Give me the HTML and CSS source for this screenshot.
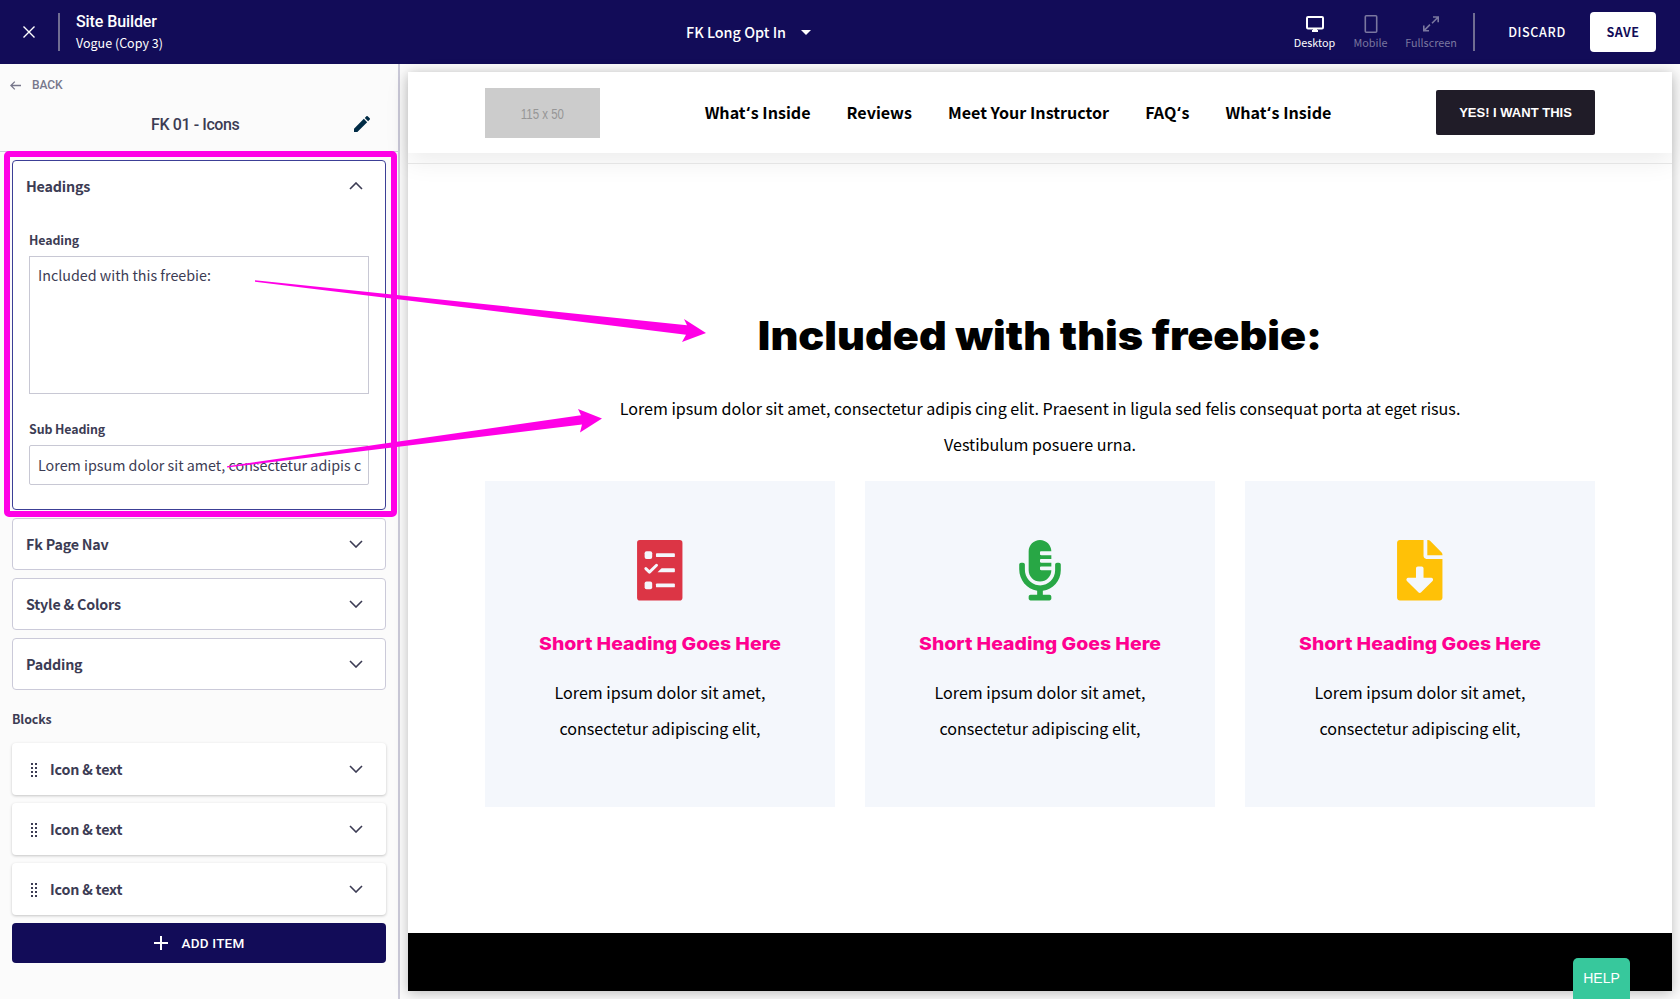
FILE: index.html
```html
<!DOCTYPE html>
<html lang="en">
<head>
<meta charset="utf-8">
<title>Site Builder</title>
<link rel="stylesheet" href="styles.css">
</head>
<body>
<svg class="defs" width="0" height="0" aria-hidden="true">
  <symbol id="chevron" viewBox="0 0 14 8"><path d="M1 1l6 6 6-6" fill="none" stroke="currentColor" stroke-width="1.6"/></symbol>
  <symbol id="grip" viewBox="0 0 6 14"><path d="M0 0h2v2H0zM4 0h2v2H4zM0 4h2v2H0zM4 4h2v2H4zM0 8h2v2H0zM4 8h2v2H4zM0 12h2v2H0zM4 12h2v2H4z" fill="currentColor"/></symbol>
</svg>
<header class="topbar">
  <div class="topbar-left">
    <svg class="close" viewBox="0 0 12 12"><path d="M.5.5l11 11M11.5.5l-11 11" stroke="#fff" stroke-width="1.4"/></svg>
    <span class="divider"></span>
    <div class="site">
      <span class="site-title">Site Builder</span>
      <span class="site-name">Vogue (Copy 3)</span>
    </div>
  </div>
  <div class="page-picker"><span>FK Long Opt In</span><i class="caret"></i></div>
  <div class="topbar-right">
    <div class="view view-desktop">
      <svg width="18" height="18" viewBox="0 0 18 18"><rect x="1" y="2" width="16" height="11.5" rx="1" fill="none" stroke="currentColor" stroke-width="2"/><path d="M7 13h4v2h1v2H6v-2h1z" fill="currentColor"/></svg>
      <span>Desktop</span>
    </div>
    <div class="view view-mobile dim">
      <svg width="18" height="18" viewBox="0 0 18 18"><rect x="3.3" y=".8" width="11.4" height="16.4" rx="1" fill="none" stroke="currentColor" stroke-width="1.6"/></svg>
      <span>Mobile</span>
    </div>
    <div class="view view-full dim">
      <svg width="18" height="18" viewBox="0 0 18 18"><path d="M11 2h5.200v5.200M16 2.200l-6 6M7 15.800H1.800v-5.200M2 15.600l6-6" fill="none" stroke="currentColor" stroke-width="1.6"/></svg>
      <span>Fullscreen</span>
    </div>
    <span class="divider"></span>
    <button class="discard">DISCARD</button>
    <button class="save">SAVE</button>
  </div>
</header>

<div class="workspace">
  <aside class="sidebar">
    <div class="side-head">
      <div class="back"><svg width="11" height="9" viewBox="0 0 11 9"><path d="M11 4.500H1M4.800.6L.9 4.500l3.900 3.900" fill="none" stroke="currentColor" stroke-width="1.300"/></svg><span>BACK</span></div>
      <div class="section-title">
        <span>FK 01 - Icons</span>
        <svg class="pencil" width="16" height="16" viewBox="3 3 18 18"><path fill="#002b45" d="M3 17.250V21h3.750L17.810 9.940l-3.750-3.750zM20.710 7.040a1 1 0 0 0 0-1.410l-2.340-2.340a1 1 0 0 0-1.410 0l-1.830 1.830 3.750 3.750z"/></svg>
      </div>
    </div>
    <div class="panels">
      <section class="panel open">
        <div class="panel-head"><span>Headings</span><svg class="chev up"><use href="#chevron"/></svg></div>
        <div class="fields">
          <label class="field-label">Heading</label>
          <div class="textarea"><span>Included with this freebie:</span></div>
          <label class="field-label">Sub Heading</label>
          <div class="input"><span>Lorem ipsum dolor sit amet, consectetur adipis c</span></div>
        </div>
      </section>
      <section class="panel"><div class="panel-head"><span>Fk Page Nav</span><svg class="chev"><use href="#chevron"/></svg></div></section>
      <section class="panel"><div class="panel-head"><span>Style &amp; Colors</span><svg class="chev"><use href="#chevron"/></svg></div></section>
      <section class="panel"><div class="panel-head"><span>Padding</span><svg class="chev"><use href="#chevron"/></svg></div></section>
    </div>
    <div class="blocks-label">Blocks</div>
    <div class="blocks">
      <div class="block"><svg class="grip"><use href="#grip"/></svg><span>Icon &amp; text</span><svg class="chev"><use href="#chevron"/></svg></div>
      <div class="block"><svg class="grip"><use href="#grip"/></svg><span>Icon &amp; text</span><svg class="chev"><use href="#chevron"/></svg></div>
      <div class="block"><svg class="grip"><use href="#grip"/></svg><span>Icon &amp; text</span><svg class="chev"><use href="#chevron"/></svg></div>
      <button class="add"><svg width="14" height="14" viewBox="0 0 14 14"><path d="M7 0v14M0 7h14" stroke="#fff" stroke-width="2"/></svg><span>ADD ITEM</span></button>
    </div>
  </aside>

  <main class="stage">
    <div class="preview">
      <nav class="site-nav">
        <div class="logo"><span>115 x 50</span></div>
        <div class="links">
          <a>What<span class="quote">‘</span>s Inside</a><a>Reviews</a><a>Meet Your Instructor</a><a>FAQ<span class="quote">‘</span>s</a><a>What<span class="quote">‘</span>s Inside</a>
        </div>
        <a class="cta">YES! I WANT THIS</a>
      </nav>
      <div class="content">
        <h1>Included with this freebie:</h1>
        <p class="lead">Lorem ipsum dolor sit amet, consectetur adipis cing elit. Praesent in ligula sed felis consequat porta at eget risus.<br>Vestibulum posuere urna.</p>
        <div class="cards">
          <article class="card">
            <svg width="45.5" height="60.5" viewBox="0 0 45 60"><rect width="45" height="60" rx="2.800" fill="#dc3545"/><g fill="#f4f7fc"><rect x="7.500" y="11.250" width="7.500" height="7.500" rx="1.900"/><rect x="7.500" y="41.250" width="7.500" height="7.500" rx="1.900"/><rect x="18.750" y="13.100" width="18.750" height="3.800" rx=".9"/><rect x="18.750" y="43.100" width="18.750" height="3.800" rx=".9"/><path d="M20.300 32l3.200-3.300c.3-.4.700-.6 1.200-.6h11.900c.5 0 .9.400.9.900v2c0 .6-.4 1-.9 1z"/></g><path d="M8.700 28.400l3.600 3.500 7-6.800" fill="none" stroke="#f4f7fc" stroke-width="2.900" stroke-linejoin="round" stroke-linecap="round"/></svg>
            <h2>Short Heading Goes Here</h2>
            <p>Lorem ipsum dolor sit amet,<br>consectetur adipiscing elit,</p>
          </article>
          <article class="card">
            <svg width="42" height="60.5" viewBox="0 0 352 512"><path fill="#28a745" d="M336 192h-16c-8.840 0-16 7.160-16 16v48c0 74.800-64.490 134.820-140.790 127.380C96.710 376.890 48 317.110 48 250.300V208c0-8.840-7.160-16-16-16H16c-8.840 0-16 7.160-16 16v40.160c0 89.640 63.970 169.550 152 181.690V464H96c-8.840 0-16 7.160-16 16v16c0 8.840 7.160 16 16 16h160c8.840 0 16-7.160 16-16v-16c0-8.840-7.160-16-16-16h-56v-33.770C285.710 418.470 352 344.900 352 256v-48c0-8.840-7.160-16-16-16zM176 352c53.020 0 96-42.980 96-96h-85.330c-5.890 0-10.670-3.580-10.670-8v-16c0-4.420 4.780-8 10.670-8H272v-32h-85.330c-5.890 0-10.670-3.580-10.670-8v-16c0-4.420 4.780-8 10.670-8H272v-32h-85.330c-5.890 0-10.670-3.580-10.670-8v-16c0-4.420 4.780-8 10.670-8H272c0-53.020-42.980-96-96-96S80 42.980 80 96v160c0 53.020 42.980 96 96 96z"/></svg>
            <h2>Short Heading Goes Here</h2>
            <p>Lorem ipsum dolor sit amet,<br>consectetur adipiscing elit,</p>
          </article>
          <article class="card">
            <svg width="45.5" height="60.5" viewBox="0 0 384 512"><path fill="#ffc107" d="M224 136V0H24C10.700 0 0 10.700 0 24v464c0 13.300 10.700 24 24 24h336c13.300 0 24-10.700 24-24V160H248c-13.200 0-24-10.800-24-24zm76.450 211.360l-96.420 95.700c-6.650 6.610-17.390 6.610-24.040 0l-96.420-95.700C73.420 337.290 80.540 320 94.820 320H160v-80c0-8.840 7.160-16 16-16h32c8.840 0 16 7.160 16 16v80h65.180c14.280 0 21.400 17.290 11.270 27.360zM377 105L279.100 7c-4.500-4.500-10.600-7-17-7H256v128h128v-6.100c0-6.300-2.500-12.400-7-16.900z"/></svg>
            <h2>Short Heading Goes Here</h2>
            <p>Lorem ipsum dolor sit amet,<br>consectetur adipiscing elit,</p>
          </article>
        </div>
      </div>
      <footer class="site-footer"></footer>
    </div>
  </main>
</div>

<svg class="annotations" width="1680" height="999" viewBox="0 0 1680 999">
  <rect x="7" y="154" width="387" height="360" rx="2" fill="none" stroke="#ff00e6" stroke-width="6"/>
  <path fill="#ff00e6" d="M255 280.300L687 325.300 684 319 706 333 682 342 686 334.800 255 281.700z"/>
  <path fill="#ff00e6" d="M227 466.200L581 415.300 578 409 602 418.500 580 432.500 582 424.500 227 467.500z"/>
</svg>
<div class="help">HELP</div>
</body>
</html>
```
FILE: styles.css
```css
* { box-sizing: border-box; }
body {
  margin: 0;
  height: 999px;
  overflow: hidden;
  position: relative;
  display: flex;
  flex-direction: column;
  background: #fbfbfb;
  color: #3c3c54;
  font-family: "Noto Sans CJK SC", "Noto Sans", sans-serif;
  font-size: 14px;
}
button { border: 0; padding: 0; font-family: inherit; }
span, a { white-space: nowrap; }
.defs { position: absolute; }

/* Top bar */
.topbar {
  flex: none;
  height: 64px;
  background: #120c58;
  color: #fff;
  display: grid;
  grid-template-columns: 686px 1fr auto;
  align-items: center;
}
.topbar-left { display: flex; align-items: center; padding-left: 23px; }
.close { width: 12px; height: 12px; }
.divider { width: 2px; height: 38px; background: #706d92; }
.topbar-left .divider { margin: 0 16px 0 23px; }
.site { display: flex; flex-direction: column; }
.site-title { font: 500 16px/20px Roboto, sans-serif; letter-spacing: -.1px; }
.site-name { font-size: 12.500px; line-height: 21px; }
.page-picker { display: flex; align-items: center; gap: 15px; font-size: 14.400px; font-weight: 500; padding-bottom: 2px; }
.caret { border: 5px solid transparent; border-top-color: #fff; border-bottom: 0; margin-top: 2px; }
.topbar-right { display: flex; align-items: center; padding-right: 24px; }
.view { display: flex; flex-direction: column; align-items: center; font-size: 10.800px; line-height: 18px; }
.view svg { margin-top: 1px; }
.view-desktop { width: 41px; margin-right: 18px; }
.view-mobile { width: 35px; margin-right: 17px; }
.view-full { width: 52px; margin-right: 16px; }
.dim { color: #7a779f; }
.discard, .save { height: 40px; padding-bottom: 2px; font-size: 12.600px; font-weight: 500; letter-spacing: .6px; }
.discard { width: 58px; margin: 0 24px 0 33px; background: none; color: #fff; }
.save { width: 66px; border-radius: 4px; background: #fff; color: #120c58; font-weight: 700; letter-spacing: .4px; }

/* Sidebar */
.workspace { flex: 1; display: flex; min-height: 0; }
.sidebar { width: 400px; flex: none; border-right: 2px solid #cbcad9; }
.side-head { height: 88px; border-bottom: 1px solid #cbcad9; padding: 9px 10px 0; }
.back { display: flex; align-items: center; gap: 11px; height: 24px; color: #77778b; font: 500 12px/24px Roboto, sans-serif; letter-spacing: -.1px; }
.section-title { display: flex; align-items: center; justify-content: space-between; height: 54px; padding: 0 18px 0 141px; font: 500 16px/24px Roboto, sans-serif; letter-spacing: -.4px; }
.section-title span { padding-top: 2px; }
.panels { padding: 8px 12px 0; display: flex; flex-direction: column; gap: 8px; }
.panel { height: 52px; border: 1px solid #cbcad9; border-radius: 4px; background: #fff; }
.panel.open { height: 350px; border-color: #3c3f96; }
.panel-head { height: 50px; padding: 0 22px 0 13px; display: flex; align-items: center; justify-content: space-between; }
.panel-head span, .block span { font-size: 14.300px; font-weight: 700; letter-spacing: -.2px; padding-bottom: 2px; }
.chev { width: 14px; height: 8px; flex: none; }
.up { transform: rotate(180deg); }
.fields { padding: 19px 16px 0; display: flex; flex-direction: column; }
.field-label { font-size: 12.400px; font-weight: 700; letter-spacing: -.1px; line-height: 20px; }
.textarea, .input { border: 1px solid #c8c8d4; padding: 0 8px; font-size: 14.300px; }
.textarea { height: 138px; margin: 6px 0 25px; line-height: 36px; }
.input { height: 40px; margin-top: 6px; line-height: 38px; border-radius: 2px; }
.blocks-label { padding-left: 12px; margin-top: 17px; line-height: 24px; font-size: 12.400px; font-weight: 700; letter-spacing: -.1px; }
.blocks { padding: 12px 12px 0; display: flex; flex-direction: column; gap: 8px; }
.block { height: 52px; border-radius: 4px; background: #fff; box-shadow: 0 1px 3px rgba(0, 0, 0, .22); display: flex; align-items: center; padding: 0 23px 0 19px; }
.grip { width: 6px; height: 14px; margin-right: 13px; margin-top: 2px; }
.block .chev { margin-left: auto; }
.add { height: 40px; border-radius: 4px; background: #120c58; color: #fff; display: flex; align-items: center; justify-content: center; gap: 14px; font: 500 13.500px/20px Roboto, sans-serif; letter-spacing: .2px; }

/* Page preview */
.stage { flex: 1; padding: 8px 8px 8px; }
.preview { height: 919px; background: #fff; box-shadow: 0 2px 12px rgba(0, 0, 0, .25); display: flex; flex-direction: column; color: #000; }
.site-nav { height: 81px; flex: none; padding: 0 77px; display: flex; align-items: center; justify-content: space-between; box-shadow: 0 8px 24px rgba(0, 0, 0, .08); }
.logo { width: 115px; height: 50px; background: #ccc; color: #969696; display: flex; align-items: center; justify-content: center; font: 14px "Liberation Sans", sans-serif; }
.logo span { transform: scaleX(.82); padding-top: 2px; }
.links { display: flex; gap: 36px; font-size: 16.100px; line-height: 24px; font-weight: 700; padding-bottom: 1px; }
.quote { font-family: "Open Sans", sans-serif; line-height: 1; padding: 0 .8px; }
.cta { width: 159px; height: 45px; border-radius: 2px; background: #201c28; color: #fff; text-align: center; font: 700 13px/45px "Liberation Sans", sans-serif; }
.content { flex: 1; margin-top: 10px; border-top: 1px solid #e4e4e4; padding: 142px 77px 0; text-align: center; }
h1 { margin: 0; font: 900 39.500px/60px Inter, sans-serif; transform: scaleX(1.09); }
.lead { margin: 24px 0 19px; font-size: 16.100px; line-height: 36px; }
.cards { display: grid; grid-template-columns: repeat(3, 1fr); gap: 30px; }
.card { height: 326px; padding-top: 59px; background: #f4f7fc; }
.card svg { display: block; margin: 0 auto; }
.card h2 { margin: 29.500px 0 16px; font: 800 18px/28px Inter, sans-serif; transform: scaleX(1.082); color: #ff0090; }
.card p { margin: 0; font-size: 16.100px; line-height: 36px; }
.site-footer { height: 58px; flex: none; background: #000; }

/* Overlays */
.annotations { position: absolute; left: 0; top: 0; pointer-events: none; }
.help { position: absolute; left: 1573px; bottom: 0; width: 57px; height: 41px; border-radius: 5px 5px 0 0; background: #37c89c; color: #fff; text-align: center; font: 14px/40px "Liberation Sans", sans-serif; }
```
